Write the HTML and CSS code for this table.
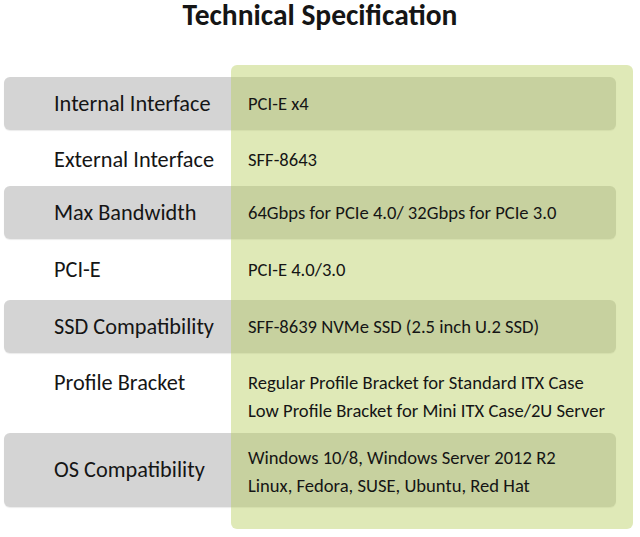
FILE: index.html
```html
<!DOCTYPE html>
<html>
<head>
<meta charset="utf-8">
<link rel="stylesheet" href="styles.css">
</head>
<body>
<h1 class="title">Technical Specification</h1>
<div class="spec">
  <div class="panel"></div>
  <div class="row shaded r1"><div class="label">Internal Interface</div><div class="value">PCI-E x4</div></div>
  <div class="row r2"><div class="label">External Interface</div><div class="value">SFF-8643</div></div>
  <div class="row shaded r3"><div class="label">Max Bandwidth</div><div class="value">64Gbps for PCIe 4.0/ 32Gbps for PCIe 3.0</div></div>
  <div class="row r4"><div class="label">PCI-E</div><div class="value">PCI-E 4.0/3.0</div></div>
  <div class="row shaded r5"><div class="label">SSD Compatibility</div><div class="value">SFF-8639 NVMe SSD (2.5 inch U.2 SSD)</div></div>
  <div class="row r6"><div class="label">Profile Bracket</div><div class="value"><div>Regular Profile Bracket for Standard ITX Case</div><div>Low Profile Bracket for Mini ITX Case/2U Server</div></div></div>
  <div class="row shaded r7"><div class="label">OS Compatibility</div><div class="value multi"><div>Windows 10/8, Windows Server 2012 R2</div><div>Linux, Fedora, SUSE, Ubuntu, Red Hat</div></div></div>
</div>
</body>
</html>
```
FILE: styles.css
```css
html, body {
  margin: 0;
  padding: 0;
  background: #ffffff;
}
body {
  width: 640px;
  height: 537px;
  overflow: hidden;
  font-family: Carlito, Lato, "Open Sans", sans-serif;
  color: #151515;
}
.title {
  margin: 0;
  padding-top: 2px;
  height: 26px;
  font-size: 29.5px;
  line-height: 26px;
  font-weight: 700;
  text-align: center;
  padding-left: 0;
}
.spec {
  position: relative;
  margin: 49px 24px 0 4px;
}
.panel {
  position: absolute;
  left: 227px;
  top: -12px;
  width: 402px;
  height: 464px;
  border-radius: 6px;
  background: rgba(184, 207, 95, 0.45);
  z-index: 1;
}
.row {
  display: grid;
  grid-template-columns: 244px 1fr;
  align-items: center;
  box-sizing: border-box;
}
.shaded {
  background: #d4d4d4;
  border-radius: 6px;
  box-shadow: 0 1px 1px rgba(0, 0, 0, 0.08);
}
.label, .value {
  position: relative;
  z-index: 2;
}
.label {
  padding-left: 50px;
  font-size: 22.3px;
  line-height: 28px;
}
.value {
  font-size: 18.6px;
  line-height: 28px;
}
.r1, .r3, .r5 { height: 53px; }
.r2 { height: 56px; padding-top: 4px; }
.r4 { height: 61px; }
.r6 {
  height: 80px;
  padding-top: 16px;
  align-items: start;
}
.r7 { height: 74px; }
.multi { padding-top: 4px; }
```
